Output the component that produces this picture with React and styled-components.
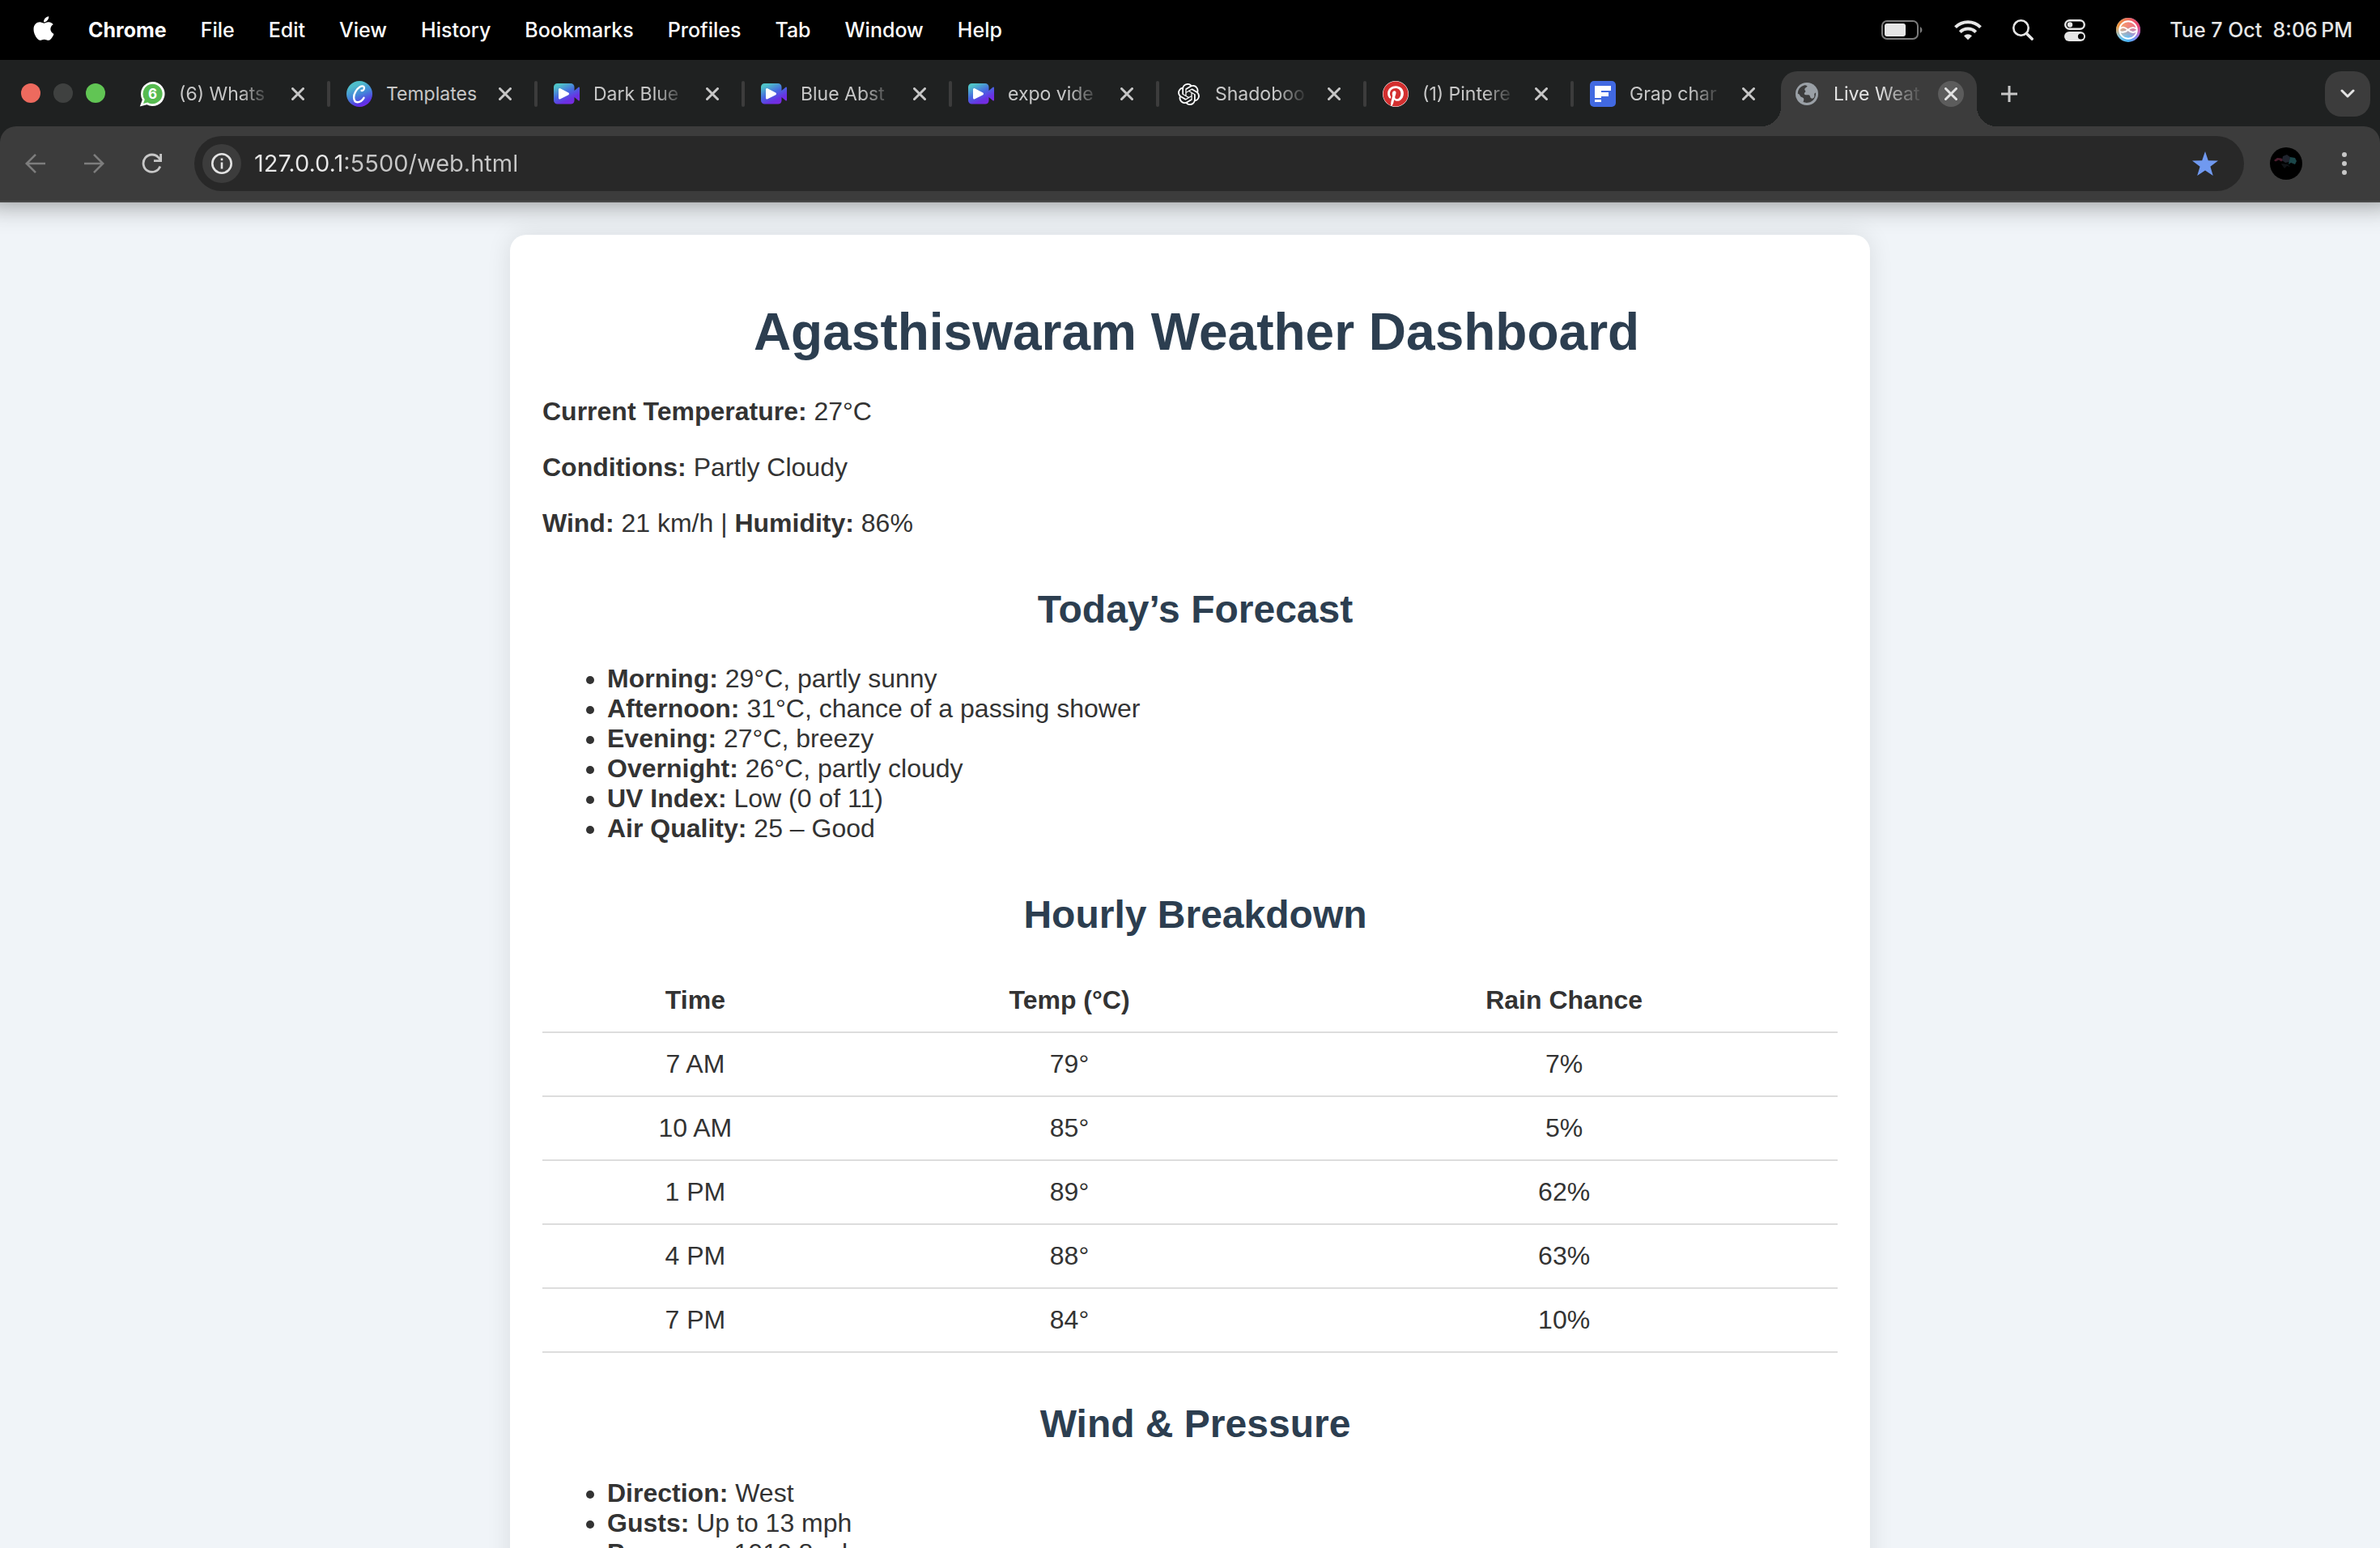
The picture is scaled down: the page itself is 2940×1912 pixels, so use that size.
import React from "react";
import styled, { createGlobalStyle, css } from "styled-components";
import { FaApple, FaPinterest } from "react-icons/fa";
import { SiOpenai } from "react-icons/si";

const UI_FONT = 'Inter, "Liberation Sans", sans-serif';
const PAGE_FONT = '"Liberation Sans", Arial, sans-serif';

const GlobalStyle = createGlobalStyle`
  *, *::before, *::after { box-sizing: border-box; }
  body { margin: 0; background: #f0f4f8; }
  button, input { font: inherit; color: inherit; margin: 0; padding: 0; border: 0; background: none; outline: none; }
  svg { display: block; flex: none; }
`;

const Screen = styled.div`
  display: flex;
  flex-direction: column;
  height: 100vh;
  overflow: hidden;
`;

/* ---------- system menu bar ---------- */

const MenuBar = styled.header`
  position: relative;
  z-index: 2;
  display: flex;
  align-items: center;
  justify-content: space-between;
  height: 74px;
  padding: 0 34px 0 41px;
  background: #000;
  color: #fff;
  font: 500 25px/32px ${UI_FONT};
  white-space: pre;
`;

const MenuItems = styled.nav`
  display: flex;
  align-items: center;
  gap: 42px;
`;

const AppleLogo = styled(FaApple)`
  width: 26px;
  height: 34px;
  margin-bottom: 4px;
`;

const MenuItem = styled.button`
  font-weight: ${(p) => (p.$bold ? 700 : 500)};
`;

const StatusItems = styled.div`
  display: flex;
  align-items: center;
  color: #e6e6e6;
  gap: 36px;
`;

const StatusIcons = styled.div`
  display: flex;
  align-items: center;
  gap: 38px;
`;

/* ---------- browser tabs ---------- */

const Chrome = styled.div`
  position: relative;
  z-index: 1;
  background: #1f2121;
  box-shadow: 0 -20px 32px 20px rgba(0, 0, 0, 0.46);
`;

const TabStrip = styled.div`
  display: flex;
  align-items: center;
  height: 82px;
  padding: 14px 12px 0 26px;
  color: #c7c7c7;
  font: 400 23px/32px ${UI_FONT};
`;

const WindowControls = styled.div`
  display: flex;
  gap: 16px;
  width: 126px;
  align-self: flex-start;
  padding-top: 15px;
`;

const Light = styled.button`
  width: 24px;
  height: 24px;
  border-radius: 50%;
  background: ${(p) => p.$color};
`;

const TabList = styled.div`
  display: flex;
  align-self: stretch;
`;

const TabItem = styled.div`
  position: relative;
  display: flex;
  align-items: center;
  width: 256px;
  padding: 0 24px 12px 20px;

  ${(p) =>
    p.$divider &&
    css`
      &::after {
        content: "";
        position: absolute;
        right: 0;
        top: 12px;
        width: 4px;
        height: 32px;
        border-radius: 2px;
        background: #3c3c3c;
      }
    `}

  ${(p) =>
    p.$active &&
    css`
      width: 242px;
      padding: 0 16px 12px;
      border-radius: 20px 20px 0 0;
      background: #3c3c3c;
      color: #e3e3e3;
      &::before,
      &::after {
        content: "";
        position: absolute;
        bottom: 0;
        width: 24px;
        height: 24px;
      }
      &::before {
        left: -24px;
        background: radial-gradient(circle at 0 0, transparent 24px, #3c3c3c 24px);
      }
      &::after {
        right: -24px;
        background: radial-gradient(circle at 100% 0, transparent 24px, #3c3c3c 24px);
      }
    `}
`;

const TabButton = styled.button`
  display: flex;
  align-items: center;
  gap: 17px;
  flex: 1;
  min-width: 0;
  height: 32px;
  text-align: left;
`;

const Favicon = styled.span`
  display: flex;
  align-items: center;
  justify-content: center;
  width: 32px;
  height: 32px;
  flex: none;
`;

const TabTitle = styled.span`
  flex: 1;
  white-space: nowrap;
  ${(p) =>
    p.$fade &&
    css`
      mask-image: linear-gradient(to right, #000 ${p.$active ? "50%" : "66%"}, transparent 100%);
    `}
`;

const TabClose = styled.button`
  display: flex;
  align-items: center;
  justify-content: center;
  width: 32px;
  height: 32px;
  margin-left: 16px;
  border-radius: 50%;
  background: ${(p) => (p.$active ? "#5c5c5c" : "transparent")};
`;

const NewTab = styled.button`
  width: 56px;
  height: 56px;
  margin-left: 12px;
  display: flex;
  align-items: center;
  justify-content: center;
  align-self: flex-start;
`;

const TabSearch = styled(NewTab)`
  margin-left: auto;
  border-radius: 20px;
  background: #3c3c3c;
  color: #e3e3e3;
`;

/* ---------- browser toolbar ---------- */

const Toolbar = styled.div`
  display: flex;
  align-items: center;
  height: 94px;
  padding: 10px 28px 10px 8px;
  border-bottom: 2px solid #484848;
  border-radius: 20px 20px 0 0;
  background: #3c3c3c;
  color: #c7c7c7;
`;

const ToolButton = styled.button`
  display: flex;
  align-items: center;
  justify-content: center;
  width: 72px;
  height: 64px;
  color: ${(p) => (p.disabled ? "#7d7d7d" : "#c7c7c7")};
`;

const Omnibox = styled.form`
  display: flex;
  align-items: center;
  flex: 1;
  height: 68px;
  margin: 0 32px 0 16px;
  padding: 0 32px 0 10px;
  border-radius: 34px;
  background: #282828;
`;

const SiteInfo = styled.button`
  display: flex;
  align-items: center;
  justify-content: center;
  width: 48px;
  height: 48px;
  margin-right: 16px;
  border-radius: 50%;
  background: #3c3c3c;
  color: #e3e3e3;
`;

const Address = styled.input`
  flex: 1;
  height: 40px;
  font: 400 29px/40px ${UI_FONT};
  color: #c7c7c7;
  background: linear-gradient(to right, #e8e8e8 112px, #c7c7c7 112px);
  background-clip: text;
  -webkit-text-fill-color: transparent;
`;

const Avatar = styled.button`
  width: 40px;
  height: 40px;
  border-radius: 50%;
  overflow: hidden;
`;

const MoreButton = styled.button`
  width: 32px;
  height: 64px;
  margin-left: 36px;
  display: flex;
  align-items: center;
  justify-content: center;
`;

/* ---------- weather page ---------- */

const Page = styled.div`
  flex: 1;
  min-height: 0;
  overflow: hidden;
  padding: 40px;
  background: #f0f4f8;
  color: #333;
  font: 400 32px/37px ${PAGE_FONT};
`;

const Card = styled.main`
  max-width: 1680px;
  margin: 0 auto;
  padding: 40px;
  border-radius: 20px;
  background: #fff;
  box-shadow: 0 0 30px rgba(0, 0, 0, 0.1);
`;

const Title = styled.h1`
  margin: 43px 0;
  padding-left: 16px;
  color: #2c3e50;
  font-size: 64px;
  line-height: 74px;
  text-align: center;
`;

const Heading = styled.h2`
  margin: 60px 0 40px;
  padding-left: 13px;
  color: #2c3e50;
  font-size: 48px;
  line-height: 55px;
  text-align: center;
`;

const Fact = styled.p`
  margin: 32px 0;
`;

const List = styled.ul`
  margin: 40px 0 32px;
  padding-left: 80px;
`;

const Table = styled.table`
  width: 100%;
  border-collapse: collapse;

  th,
  td {
    padding: 20px;
    border-bottom: 2px solid #ddd;
    text-align: center;
  }
`;

/* ---------- icons ---------- */

const stroke = { fill: "none", stroke: "currentColor", strokeLinecap: "round", strokeLinejoin: "round" };

const CloseIcon = () => (
  <svg width="16" height="16" viewBox="0 0 16 16" {...stroke} strokeWidth="3">
    <path d="M1.5 1.5l13 13M14.5 1.5l-13 13" />
  </svg>
);

const WhatsAppIcon = () => (
  <svg width="32" height="32" viewBox="0 0 32 32">
    <path d="M16.4 1a15 15 0 1 1-7 28.200L.8 31.400l3-8.200A15 15 0 0 1 16.400 1z" fill="#fff" />
    <path d="M16.400 3.800a12.200 12.200 0 1 1-6.200 22.700L5 28l1.800-5A12.200 12.200 0 0 1 16.400 3.800z" fill="#56bb50" />
    <text x="16.500" y="22" fill="#fff" fontFamily="Inter, sans-serif" fontSize="17" fontWeight="700" textAnchor="middle">6</text>
  </svg>
);

const CanvaIcon = () => (
  <svg width="32" height="32" viewBox="0 0 32 32">
    <defs>
      <linearGradient id="canva" x1="0.3" y1="0" x2="0.7" y2="1">
        <stop offset="0.15" stopColor="#4fbecb" />
        <stop offset="0.5" stopColor="#4488d8" />
        <stop offset="0.85" stopColor="#5a32e6" />
        <stop offset="1" stopColor="#7d2ae8" />
      </linearGradient>
    </defs>
    <circle cx="16" cy="16" r="16" fill="url(#canva)" />
    <path
      d="M18.600 11.800c1.800.6 3.600-1.600 3.300-3.700-.3-2-3-2.300-5.600-.6C12.500 10 9 15.500 9.100 20.300c.1 4 2 5.900 4.600 5.900 3.200 0 5.900-2.200 7.800-5.400"
      fill="none"
      stroke="#fff"
      strokeWidth="2.400"
      strokeLinecap="round"
    />
  </svg>
);

const VideoIcon = () => (
  <svg width="32" height="32" viewBox="0 0 32 32">
    <defs>
      <linearGradient id="video" x1="0.1" y1="0" x2="0.7" y2="1">
        <stop offset="0.1" stopColor="#4fc3c8" />
        <stop offset="0.5" stopColor="#4668e0" />
        <stop offset="0.8" stopColor="#6a31e4" />
        <stop offset="1" stopColor="#7a2ae0" />
      </linearGradient>
    </defs>
    <path
      d="M4.500 3h16.500a4.500 4.500 0 0 1 4.500 4.500v4.500l5-4.200c.7-.5 1.500-.1 1.500.8v14.800c0 .9-.8 1.300-1.500.8l-5-4.200v4.500A4.500 4.500 0 0 1 21 28.500H4.500A4.500 4.500 0 0 1 0 24V7.500A4.500 4.500 0 0 1 4.500 3z"
      fill="url(#video)"
    />
    <path d="M7.500 10.500v10.500l10-5.200z" fill="#fff" stroke="#fff" strokeWidth="3" strokeLinejoin="round" />
  </svg>
);

const PinterestIcon = styled(FaPinterest)`
  width: 32px;
  height: 32px;
  border-radius: 50%;
  background: #fff;
  color: #d32f2f;
`;

const OpenAiIcon = styled(SiOpenai)`
  width: 27px;
  height: 27px;
  color: #fff;
`;

const FIcon = () => (
  <svg width="32" height="32" viewBox="0 0 32 32">
    <rect width="32" height="32" rx="5" fill="#4169e1" />
    <path d="M6 6h20v6H14v2h9v5h-9v2H6zM6 23h8v3H6z" fill="#fff" />
  </svg>
);

const GlobeIcon = () => (
  <svg width="28" height="28" viewBox="0 0 28 28">
    <circle cx="14" cy="14" r="14" fill="#9aa0a6" />
    <path
      d="M11 3.300c2 0 3.500.5 3.500 1.500-1 1.500-2.700 1.200-3.200 3.300-.3 1.400 1.500 1.600 1 3.200-.3 1-2 1.400-1.400 3 .6 1.500 4.400.6 6 1.200 1.500.6.8 2.600 2 3.600 1.500 1.200 3.800.3 4.300-1.600.6-2.200-.8-3.500.8-4.500l1-.4a11.300 11.300 0 0 1-15.500 11.500c.2-1.700 1.500-3.300.3-4.900-1.100-1.500-3.300-1-4-2.800-.5-1.400-1.800-2.400-3.100-2.900A11.300 11.300 0 0 1 11 3.300z"
      fill="#3c3c3c"
    />
  </svg>
);

const PlusIcon = () => (
  <svg width="20" height="20" viewBox="0 0 20 20" stroke="currentColor" strokeWidth="3">
    <path d="M10 0v20M0 10h20" />
  </svg>
);

const ChevronIcon = () => (
  <svg width="18" height="12" viewBox="0 0 18 12" {...stroke} strokeWidth="3">
    <path d="M2 2l7 7 7-7" />
  </svg>
);

const ArrowIcon = ({ forward }) => (
  <svg width="26" height="26" viewBox="0 0 26 26" {...stroke} strokeLinecap="butt" strokeLinejoin="miter" strokeWidth="2.600">
    {forward ? <path d="M1 13h23M13 1.800L24.200 13 13 24.200" /> : <path d="M25 13H2M13 1.800L1.800 13 13 24.200" />}
  </svg>
);

const ReloadIcon = () => (
  <svg width="26" height="26" viewBox="0 0 26 26">
    <path d="M22.800 16.500A10.700 10.700 0 1 1 20.800 5.600l2.500 2.700" fill="none" stroke="currentColor" strokeWidth="2.800" />
    <path d="M25 1v10H15V8.200h7.200V1z" fill="currentColor" />
  </svg>
);

const InfoIcon = () => (
  <svg width="26" height="26" viewBox="0 0 26 26">
    <circle cx="13" cy="13" r="11.700" fill="none" stroke="currentColor" strokeWidth="2.600" />
    <path d="M11.700 11.500h2.600v8h-2.600zM11.700 6.500h2.600v2.700h-2.600z" fill="currentColor" />
  </svg>
);

const StarIcon = () => (
  <svg width="32" height="30" viewBox="0 0 32 30">
    <path d="M16 0l3.800 11.200L32 11.500l-9.600 7.300L25.800 30 16 23.600 6.200 30l3.400-11.200L0 11.500l12.200-.3z" fill="#7099f0" />
  </svg>
);

const DotsIcon = () => (
  <svg width="6" height="28" viewBox="0 0 6 28" fill="currentColor">
    <circle cx="3" cy="3" r="3" />
    <circle cx="3" cy="14" r="3" />
    <circle cx="3" cy="25" r="3" />
  </svg>
);

const AvatarArt = () => (
  <svg width="40" height="40" viewBox="0 0 40 40">
    <rect width="40" height="40" fill="#000" />
    <path d="M5 16l4-3 5 .5 3 2-3 2-3-2-4 2z" fill="#4a1c2e" />
    <path d="M16 11l5-2 4 3-1 6-5 1-4-3z" fill="#20242e" />
    <path d="M25 12l6 1 2 4-2 4-5-2-3 2 1-5z" fill="#1b4649" />
    <path d="M14 20l8 1 3 3-4-1-3 3-3-4z" fill="#101316" />
  </svg>
);

const BatteryIcon = () => (
  <svg width="52" height="24" viewBox="0 0 52 24">
    <rect x="1" y="1" width="44" height="22" rx="6" fill="none" stroke="#7b7b7b" strokeWidth="2" />
    <rect x="4" y="4" width="26" height="16" rx="3" fill="#e6e6e6" />
    <path d="M48 8a4.500 4.500 0 0 1 0 8z" fill="#7b7b7b" />
  </svg>
);

const WifiIcon = () => (
  <svg width="34" height="26" viewBox="0 0 34 26" fill="none" stroke="#e6e6e6" strokeWidth="4">
    <path d="M1.500 9.700a22 22 0 0 1 31 0" />
    <path d="M7.300 15.600a13.800 13.800 0 0 1 19.400 0" />
    <path d="M12 20.200a7.200 7.200 0 0 1 10 0L17 25.200z" fill="#e6e6e6" stroke="none" />
  </svg>
);

const SearchIcon = () => (
  <svg width="26" height="26" viewBox="0 0 26 26" {...stroke} strokeWidth="2.600">
    <circle cx="10.500" cy="10.500" r="9.200" />
    <path d="M17.500 17.500l6.600 6.600" strokeWidth="3.600" />
  </svg>
);

const ControlCenterIcon = () => (
  <svg width="26" height="27" viewBox="0 0 26 27">
    <rect x="1.200" y="1.200" width="23.600" height="10.600" rx="5.300" fill="none" stroke="#e6e6e6" strokeWidth="2.400" />
    <circle cx="7" cy="6.500" r="3.200" fill="#e6e6e6" />
    <rect y="15" width="26" height="12" rx="6" fill="#e6e6e6" />
    <circle cx="20.500" cy="21" r="3.600" fill="#000" />
  </svg>
);

const SiriIcon = () => (
  <svg width="30" height="30" viewBox="0 0 30 30">
    <defs>
      <linearGradient id="siri-top" x1="0" y1="0" x2="1" y2="0">
        <stop offset="0" stopColor="#f0a03c" />
        <stop offset="0.5" stopColor="#ee6a5a" />
        <stop offset="1" stopColor="#e83f78" />
      </linearGradient>
      <linearGradient id="siri-bottom" x1="0" y1="0" x2="1" y2="0">
        <stop offset="0" stopColor="#8fd0e8" />
        <stop offset="0.5" stopColor="#45b0f0" />
        <stop offset="1" stopColor="#a878f0" />
      </linearGradient>
      <linearGradient id="siri-fade" x1="0" y1="0" x2="0" y2="1">
        <stop offset="0.35" stopColor="#fff" />
        <stop offset="0.8" stopColor="#000" />
      </linearGradient>
      <mask id="siri-mask">
        <rect width="30" height="30" fill="url(#siri-fade)" />
      </mask>
    </defs>
    <circle cx="15" cy="15" r="15" fill="url(#siri-bottom)" />
    <circle cx="15" cy="15" r="15" fill="url(#siri-top)" mask="url(#siri-mask)" />
    <g fill="none" stroke="#fff" strokeWidth="1.900">
      <circle cx="15" cy="15" r="10.800" fill="#fff" fillOpacity="0.18" />
      <path d="M4.500 14c3-3.500 6.500-2.500 10 .8s7 4.600 10.500 1.200M4.700 17c3.500 1.500 7.300.6 10.300-2.200s6.500-3.600 10-1.300" />
    </g>
  </svg>
);

/* ---------- data ---------- */

const MENUS = ["Chrome", "File", "Edit", "View", "History", "Bookmarks", "Profiles", "Tab", "Window", "Help"];

const TABS = [
  { title: "(6) Whats", icon: <WhatsAppIcon />, fade: true },
  { title: "Templates", icon: <CanvaIcon /> },
  { title: "Dark Blue", icon: <VideoIcon />, fade: true },
  { title: "Blue Abst", icon: <VideoIcon />, fade: true },
  { title: "expo vide", icon: <VideoIcon />, fade: true },
  { title: "Shadoboo", icon: <OpenAiIcon />, fade: true },
  { title: "(1) Pintere", icon: <PinterestIcon />, fade: true },
  { title: "Grap char", icon: <FIcon />, fade: true },
  { title: "Live Weat", icon: <GlobeIcon />, fade: true, active: true },
];

const FORECAST = [
  ["Morning", "29°C, partly sunny"],
  ["Afternoon", "31°C, chance of a passing shower"],
  ["Evening", "27°C, breezy"],
  ["Overnight", "26°C, partly cloudy"],
  ["UV Index", "Low (0 of 11)"],
  ["Air Quality", "25 – Good"],
];

const HOURLY = [
  ["7 AM", "79°", "7%"],
  ["10 AM", "85°", "5%"],
  ["1 PM", "89°", "62%"],
  ["4 PM", "88°", "63%"],
  ["7 PM", "84°", "10%"],
];

const WIND = [
  ["Direction", "West"],
  ["Gusts", "Up to 13 mph"],
  ["Pressure", "1010.8 mb"],
];

const FactList = ({ items }) => (
  <List>
    {items.map(([label, value]) => (
      <li key={label}>
        <strong>{label}:</strong> {value}
      </li>
    ))}
  </List>
);

export default function App() {
  return (
    <Screen>
      <GlobalStyle />
      <MenuBar>
        <MenuItems aria-label="Menu bar">
          <AppleLogo aria-hidden />
          {MENUS.map((name, i) => (
            <MenuItem key={name} type="button" $bold={i === 0}>
              {name}
            </MenuItem>
          ))}
        </MenuItems>
        <StatusItems>
          <StatusIcons>
            <BatteryIcon />
            <WifiIcon />
            <SearchIcon />
            <ControlCenterIcon />
            <SiriIcon />
          </StatusIcons>
          <time>{"Tue 7 Oct  8:06\u202fPM"}</time>
        </StatusItems>
      </MenuBar>

      <Chrome>
        <TabStrip>
          <WindowControls>
            <Light type="button" aria-label="Close window" $color="#ed6a5e" />
            <Light type="button" aria-label="Minimise window" $color="#3f4140" />
            <Light type="button" aria-label="Zoom window" $color="#61c554" />
          </WindowControls>
          <TabList role="tablist">
            {TABS.map((tab, i) => (
              <TabItem key={i} $active={tab.active} $divider={i < TABS.length - 2}>
                <TabButton type="button" role="tab" aria-selected={!!tab.active}>
                  <Favicon>{tab.icon}</Favicon>
                  <TabTitle $active={tab.active} $fade={tab.fade}>
                    {tab.title}
                  </TabTitle>
                </TabButton>
                <TabClose type="button" aria-label="Close tab" $active={tab.active}>
                  <CloseIcon />
                </TabClose>
              </TabItem>
            ))}
          </TabList>
          <NewTab type="button" aria-label="New tab">
            <PlusIcon />
          </NewTab>
          <TabSearch type="button" aria-label="Search tabs">
            <ChevronIcon />
          </TabSearch>
        </TabStrip>

        <Toolbar>
          <ToolButton type="button" aria-label="Back" disabled>
            <ArrowIcon />
          </ToolButton>
          <ToolButton type="button" aria-label="Forward" disabled>
            <ArrowIcon forward />
          </ToolButton>
          <ToolButton type="button" aria-label="Reload">
            <ReloadIcon />
          </ToolButton>
          <Omnibox onSubmit={(e) => e.preventDefault()}>
            <SiteInfo type="button" aria-label="Site information">
              <InfoIcon />
            </SiteInfo>
            <Address type="text" aria-label="Address" defaultValue="127.0.0.1:5500/web.html" />
            <button type="button" aria-label="Edit bookmark">
              <StarIcon />
            </button>
          </Omnibox>
          <Avatar type="button" aria-label="Profile">
            <AvatarArt />
          </Avatar>
          <MoreButton type="button" aria-label="More">
            <DotsIcon />
          </MoreButton>
        </Toolbar>
      </Chrome>

      <Page>
        <Card>
          <Title>Agasthiswaram Weather Dashboard</Title>
          <Fact>
            <strong>Current Temperature:</strong> 27°C
          </Fact>
          <Fact>
            <strong>Conditions:</strong> Partly Cloudy
          </Fact>
          <Fact>
            <strong>Wind:</strong> 21 km/h | <strong>Humidity:</strong> 86%
          </Fact>

          <Heading>Today’s Forecast</Heading>
          <FactList items={FORECAST} />

          <Heading>Hourly Breakdown</Heading>
          <Table>
            <thead>
              <tr>
                <th scope="col">Time</th>
                <th scope="col">Temp (°C)</th>
                <th scope="col">Rain Chance</th>
              </tr>
            </thead>
            <tbody>
              {HOURLY.map(([time, temp, rain]) => (
                <tr key={time}>
                  <td>{time}</td>
                  <td>{temp}</td>
                  <td>{rain}</td>
                </tr>
              ))}
            </tbody>
          </Table>

          <Heading>Wind &amp; Pressure</Heading>
          <FactList items={WIND} />
        </Card>
      </Page>
    </Screen>
  );
}
